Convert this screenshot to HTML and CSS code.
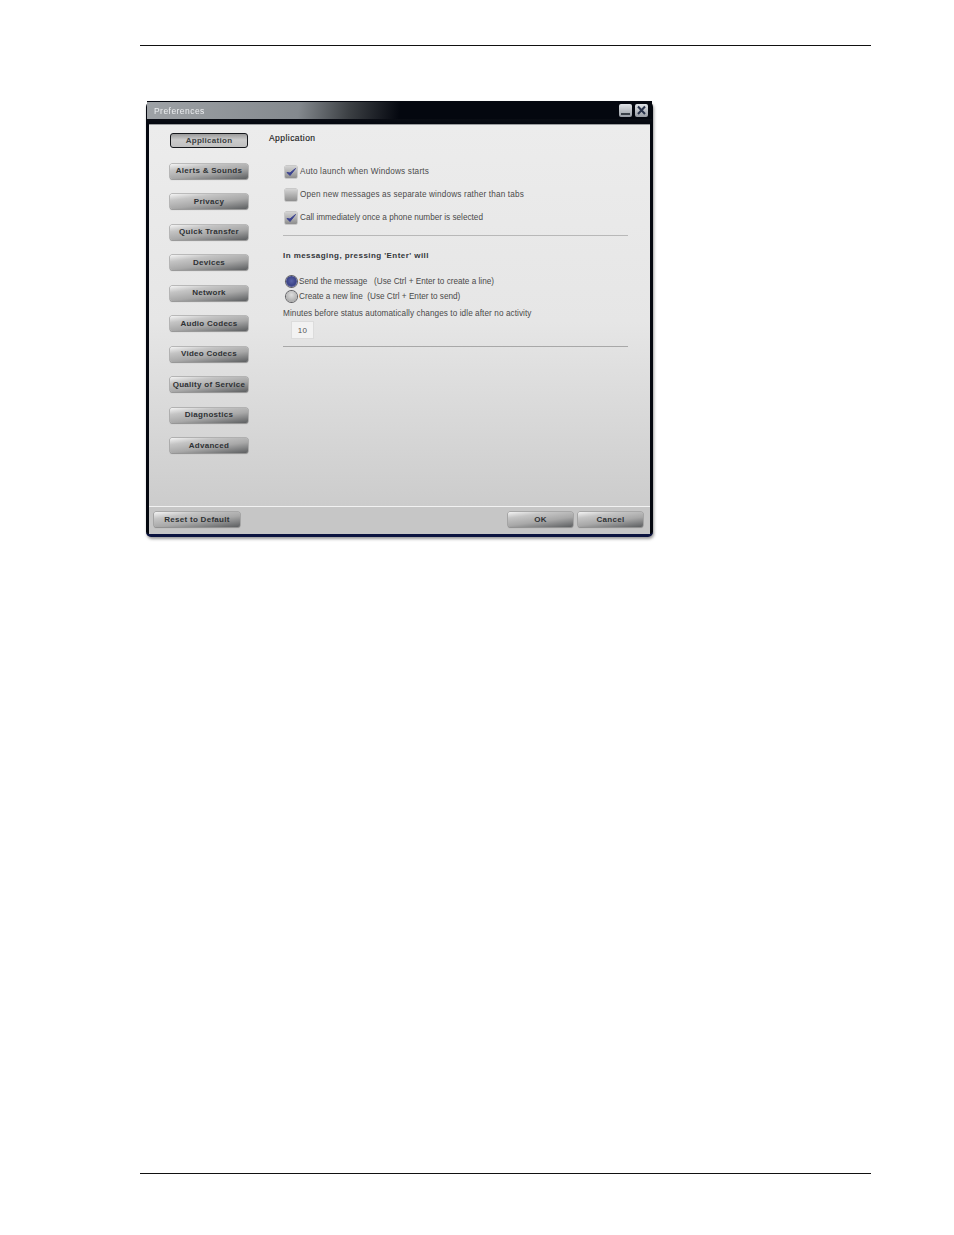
FILE: index.html
```html
<!DOCTYPE html>
<html lang="en">
<head>
<meta charset="utf-8">
<title>Preferences</title>
<link rel="stylesheet" href="styles.css">
</head>
<body>
<div class="page">
  <div class="rule rule-top"></div>
  <div class="window">
    <div class="titlebar">
      <span class="title">Preferences</span>
      <div class="controls">
        <span class="ctl"><svg viewBox="0 0 13 13" width="13" height="13"><rect x="2" y="9" width="9" height="2" fill="#3a4048"/></svg></span>
        <span class="ctl"><svg viewBox="0 0 13 13" width="13" height="13"><path d="M3 2.5 10 10M10 2.5 3 10" stroke="#28324a" stroke-width="2" fill="none"/></svg></span>
      </div>
    </div>
    <div class="client">
      <div class="main">
        <nav class="nav">
          <button class="btn active">Application</button>
          <button class="btn">Alerts &amp; Sounds</button>
          <button class="btn">Privacy</button>
          <button class="btn">Quick Transfer</button>
          <button class="btn">Devices</button>
          <button class="btn">Network</button>
          <button class="btn">Audio Codecs</button>
          <button class="btn">Video Codecs</button>
          <button class="btn">Quality of Service</button>
          <button class="btn">Diagnostics</button>
          <button class="btn">Advanced</button>
        </nav>
        <section class="panel">
          <h2 class="panel-title">Application</h2>
          <div class="content">
            <div class="checks">
              <label class="row track-auto"><span class="box"><svg viewBox="0 0 12 12" width="12" height="12"><path d="M2 6.5 5 9.5 10.5 2.5 5 7Z" fill="#3a4290" stroke="#3a4290" stroke-width="1"/></svg></span><span>Auto launch when Windows starts</span></label>
              <label class="row track-open"><span class="box"></span><span>Open new messages as separate windows rather than tabs</span></label>
              <label class="row track-none"><span class="box"><svg viewBox="0 0 12 12" width="12" height="12"><path d="M2 6.5 5 9.5 10.5 2.5 5 7Z" fill="#3a4290" stroke="#3a4290" stroke-width="1"/></svg></span><span>Call immediately once a phone number is selected</span></label>
            </div>
            <hr class="sep sep-one">
            <h3 class="group-title">In messaging, pressing 'Enter' will</h3>
            <div class="radios">
              <label class="row track-none"><span class="radio on"></span><span class="pre">Send the message   (Use Ctrl + Enter to create a line)</span></label>
              <label class="row track-none"><span class="radio"></span><span class="pre">Create a new line  (Use Ctrl + Enter to send)</span></label>
            </div>
            <p class="idle">Minutes before status automatically changes to idle after no activity</p>
            <div class="field">10</div>
            <hr class="sep sep-two">
          </div>
        </section>
      </div>
      <footer class="footer">
        <button class="btn btn-reset">Reset to Default</button>
        <div class="footer-right">
          <button class="btn btn-ok">OK</button>
          <button class="btn btn-cancel">Cancel</button>
        </div>
      </footer>
    </div>
  </div>
  <div class="spacer"></div>
  <div class="rule"></div>
</div>
</body>
</html>
```
FILE: styles.css
```css
* { box-sizing: border-box; }
html, body { margin: 0; padding: 0; background: #fff; }
body { font-family: "Liberation Sans", Arial, sans-serif; }

.page {
  width: 954px;
  height: 1235px;
  padding: 45px 83px 0 140px;
  display: flex;
  flex-direction: column;
  overflow: hidden;
}
.rule { height: 1px; background: #111; flex: none; }
.spacer { height: 636px; flex: none; }

.window {
  width: 507px;
  height: 436px;
  margin: 55px 0 0 6px;
  flex: none;
  display: flex;
  flex-direction: column;
  background: #04070f;
  border-radius: 6px 6px 5px 5px;
  border-bottom: 3px solid #0c1440;
  box-shadow: 1px 2px 3px rgba(70, 70, 70, .55);
  padding: 0 3px;
  filter: blur(.3px);
}
.titlebar {
  height: 23px;
  flex: none;
  margin: 0 -2px 0 -2px;
  padding: 3px 4px 0 7px;
  display: flex;
  justify-content: space-between;
  align-items: flex-start;
  border-top: 1px solid #04070f;
  background: linear-gradient(97deg, #9ea2a6 0, #84898e 30%, #3c4044 40%, #04070f 50%, #04070f 100%);
  position: relative;
}
.titlebar::after {
  content: "";
  position: absolute;
  left: 0; right: 0; bottom: 0;
  height: 5px;
  background: linear-gradient(#0a0d14, #04070f);
}
.title {
  font-size: 8.5px;
  line-height: 12px;
  letter-spacing: .45px;
  color: #eceef0;
  position: relative;
  z-index: 1;
}
.controls { display: flex; gap: 3px; position: relative; z-index: 1; margin-top: -1px; }
.ctl {
  width: 13px;
  height: 13px;
  display: block;
  border-radius: 2px;
  background: linear-gradient(#dfe2e6, #989ca4);
}
.ctl svg { display: block; }

.client {
  flex: 1;
  min-height: 0;
  display: flex;
  flex-direction: column;
  border-top: 1px solid #9a9c9e;
  background: linear-gradient(#ececec 0, #e6e6e6 48%, #c8c8c8 100%);
}
.main { flex: 1; min-height: 0; display: flex; }

.nav {
  width: 120px;
  flex: none;
  padding: 8px 0 0 21px;
  display: flex;
  flex-direction: column;
  align-items: flex-start;
  gap: 15.5px;
}
.btn {
  width: 78px;
  height: 15px;
  padding: 0;
  flex: none;
  font-family: "Liberation Sans", Arial, sans-serif;
  font-size: 8px;
  font-weight: 700;
  letter-spacing: .28px;
  line-height: 12px;
  text-align: center;
  color: #2e3134;
  border: 0;
  border-radius: 2px;
  background: linear-gradient(172deg, #f4f4f4 0, #c4c4c4 26%, #a8a8a8 58%, #5c5e60 100%);
  box-shadow: 0 0 0 .5px #8a8a8a, 0 1px 1px rgba(120, 120, 120, .6);
}
.btn.active {
  background: linear-gradient(#9a9a9a 0, #cccccc 45%, #c0c0c0 100%);
  box-shadow: none;
  border: 1px solid #16181c;
  border-radius: 3px;
  color: #3c3f42;
}

.panel { flex: 1; min-width: 0; padding: 7px 0 0 0; }
.panel-title {
  margin: 0;
  font-size: 8.5px;
  font-weight: 400;
  line-height: 12px;
  letter-spacing: .45px;
  color: #202020;
  -webkit-text-stroke: .15px #202020;
}
.content { padding: 21px 22px 0 14px; }
.checks { display: flex; flex-direction: column; gap: 10px; }
.row {
  display: flex;
  align-items: center;
  height: 13px;
  font-size: 8.2px;
  color: #4a4a4a;
}
.track-auto { letter-spacing: .2px; }
.track-open { letter-spacing: .16px; }
.track-none { letter-spacing: 0; }
.box {
  width: 12px;
  height: 12px;
  margin: 0 3px 0 2px;
  flex: none;
  border-radius: 1px;
  background: linear-gradient(#d4d4d4, #8e8e8e);
  box-shadow: 0 0 0 .5px #a8a8a8;
}
.box svg { display: block; }
.sep { margin: 0; border: 0; height: 1px; background: #b8b8b8; }
.sep-one { margin-top: 11px; }
.group-title {
  margin: 14px 0 0;
  font-size: 8px;
  font-weight: 700;
  line-height: 12px;
  letter-spacing: .44px;
  color: #33363a;
}
.radios { margin-top: 13px; display: flex; flex-direction: column; gap: 2px; }
.pre { white-space: pre; }
.radio {
  width: 11px;
  height: 11px;
  margin: 0 2px 0 3px;
  flex: none;
  border-radius: 50%;
  background: radial-gradient(circle at 50% 35%, #dedede, #9a9a9a);
  box-shadow: 0 0 0 1px #5e5e62;
}
.radio.on { background: radial-gradient(circle at 50% 45%, #5a64a8 0, #3c4488 55%, #9a9cb8 100%); }
.idle {
  margin: 5px 0 0;
  font-size: 8.2px;
  line-height: 12px;
  letter-spacing: .08px;
  color: #4a4a4a;
}
.field {
  width: 23px;
  height: 18px;
  margin: 1px 0 0 8px;
  font-size: 8px;
  line-height: 17px;
  text-align: center;
  letter-spacing: .3px;
  color: #555;
  background: #f2f2f2;
  border: 1px solid #dcdcdc;
}
.sep-two { margin-top: 7px; background: #a8a8a8; }

.footer {
  height: 28px;
  flex: none;
  padding: 5px 7px 0 5px;
  display: flex;
  justify-content: space-between;
  align-items: flex-start;
  border-top: 1px solid #f2f2f2;
  background: #c6c6c6;
}
.footer-right { display: flex; gap: 5px; }
.btn-reset { width: 86px; }
.btn-ok { width: 65px; }
.btn-cancel { width: 65px; }
```
